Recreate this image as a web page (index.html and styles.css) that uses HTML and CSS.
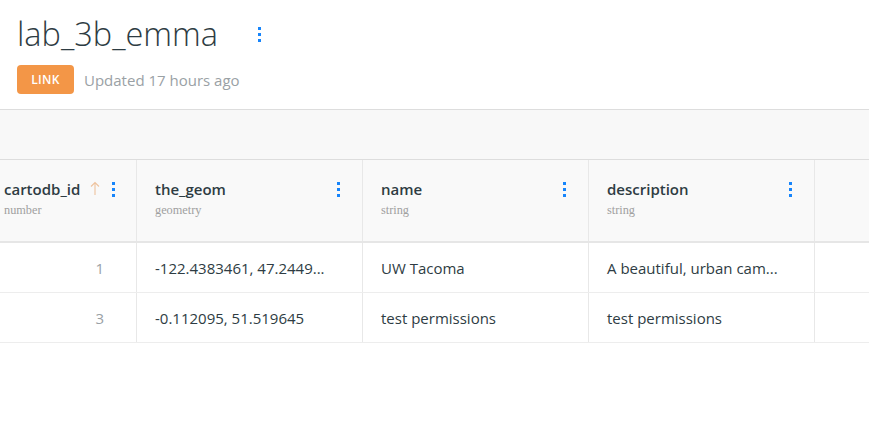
FILE: index.html
```html
<!DOCTYPE html>
<html>
<head>
<meta charset="utf-8">
<link rel="stylesheet" href="styles.css">
</head>
<body>
<header class="head">
  <div class="title-row">
    <h1 class="title">lab_3b_emma</h1>
    <span class="kebab kebab-title"><i></i><i></i><i></i></span>
  </div>
  <div class="meta-row">
    <span class="badge">LINK</span>
    <span class="updated">Updated 17 hours ago</span>
  </div>
</header>
<div class="band"></div>
<div class="table">
  <div class="row hrow">
    <div class="cell c-id">
      <div class="hname hname-id">
        <span class="cname">cartodb_id</span>
        <svg class="arrow" width="10" height="14" viewBox="0 0 10 14"><path d="M5 1.5V14M1 5.5L5 1.5L9 5.5" fill="none" stroke="#EEC39E" stroke-width="1.1"/></svg>
        <span class="kebab"><i></i><i></i><i></i></span>
      </div>
      <div class="ctype">number</div>
    </div>
    <div class="cell c-col">
      <div class="hname"><span class="cname">the_geom</span><span class="kebab"><i></i><i></i><i></i></span></div>
      <div class="ctype">geometry</div>
    </div>
    <div class="cell c-col">
      <div class="hname"><span class="cname">name</span><span class="kebab"><i></i><i></i><i></i></span></div>
      <div class="ctype">string</div>
    </div>
    <div class="cell c-col">
      <div class="hname"><span class="cname">description</span><span class="kebab"><i></i><i></i><i></i></span></div>
      <div class="ctype">string</div>
    </div>
    <div class="cell c-rest"></div>
  </div>
  <div class="row drow">
    <div class="cell c-id num">1</div>
    <div class="cell c-col">-122.4383461, 47.2449...</div>
    <div class="cell c-col">UW Tacoma</div>
    <div class="cell c-col">A beautiful, urban cam...</div>
    <div class="cell c-rest"></div>
  </div>
  <div class="row drow">
    <div class="cell c-id num">3</div>
    <div class="cell c-col">-0.112095, 51.519645</div>
    <div class="cell c-col">test permissions</div>
    <div class="cell c-col">test permissions</div>
    <div class="cell c-rest"></div>
  </div>
</div>
</body>
</html>
```
FILE: styles.css
```css
* { box-sizing: border-box; }
html, body { margin: 0; padding: 0; background: #fff; }
body {
  font-family: "Open Sans", "Liberation Sans", sans-serif;
  color: #2E3C43;
  width: 869px;
  overflow: hidden;
}
.head { padding: 12px 0 0 17px; height: 109px; }
.title-row { display: flex; align-items: center; height: 44px; }
.title {
  margin: 0;
  font-size: 32.5px;
  font-weight: 300;
  line-height: 44px;
  color: #2E3C43;
}
.kebab { display: inline-flex; flex-direction: column; gap: 3px; width: 3px; }
.kebab i { display: block; width: 3px; height: 3px; background: #1785FB; }
.kebab-title { margin-left: 40px; }
.meta-row { display: flex; align-items: center; margin-top: 9px; }
.badge {
  display: inline-flex; align-items: center; justify-content: center;
  width: 57px; height: 29px;
  background: #F39647;
  color: #fff;
  border-radius: 4px;
  font-size: 12px;
  font-weight: 600;
  letter-spacing: 0.3px;
}
.updated { margin-left: 10px; font-size: 15px; color: #9AA1A5; }
.band {
  height: 51px;
  background: #F8F8F8;
  border-top: 1px solid #DDDDDD;
  border-bottom: 1px solid #DDDDDD;
}
.table { display: flex; flex-direction: column; }
.row { display: flex; }
.cell { flex: none; border-right: 1px solid #E8E8E8; }
.c-id { width: 137px; padding-left: 4px; padding-right: 18px; }
.c-col { width: 226px; padding-left: 18px; padding-right: 22px; }
.c-rest { flex: 1; border-right: none; }
.hrow { height: 83px; background: #F9F9F9; border-bottom: 2px solid #E6E6E6; }
.hrow .cell { padding-top: 19px; }
.hname { display: flex; align-items: center; justify-content: space-between; height: 20px; }
.hname-id { justify-content: flex-start; }
.hname-id .arrow { margin-left: 10px; margin-top: -2px; }
.hname-id .kebab { margin-left: 12px; }
.cname { font-size: 15px; font-weight: 600; color: #2E3C43; }
.ctype {
  font-family: "Liberation Serif", serif;
  font-size: 12.3px;
  color: #A0A0A0;
  margin-top: 4px;
}
.drow { height: 50px; border-bottom: 1px solid #EDEDED; align-items: stretch; }
.drow .cell { display: flex; align-items: center; font-size: 15px; color: #2E3C43; }
.drow .c-id { justify-content: flex-end; padding-right: 32px; color: #9AA1A5; }
```
